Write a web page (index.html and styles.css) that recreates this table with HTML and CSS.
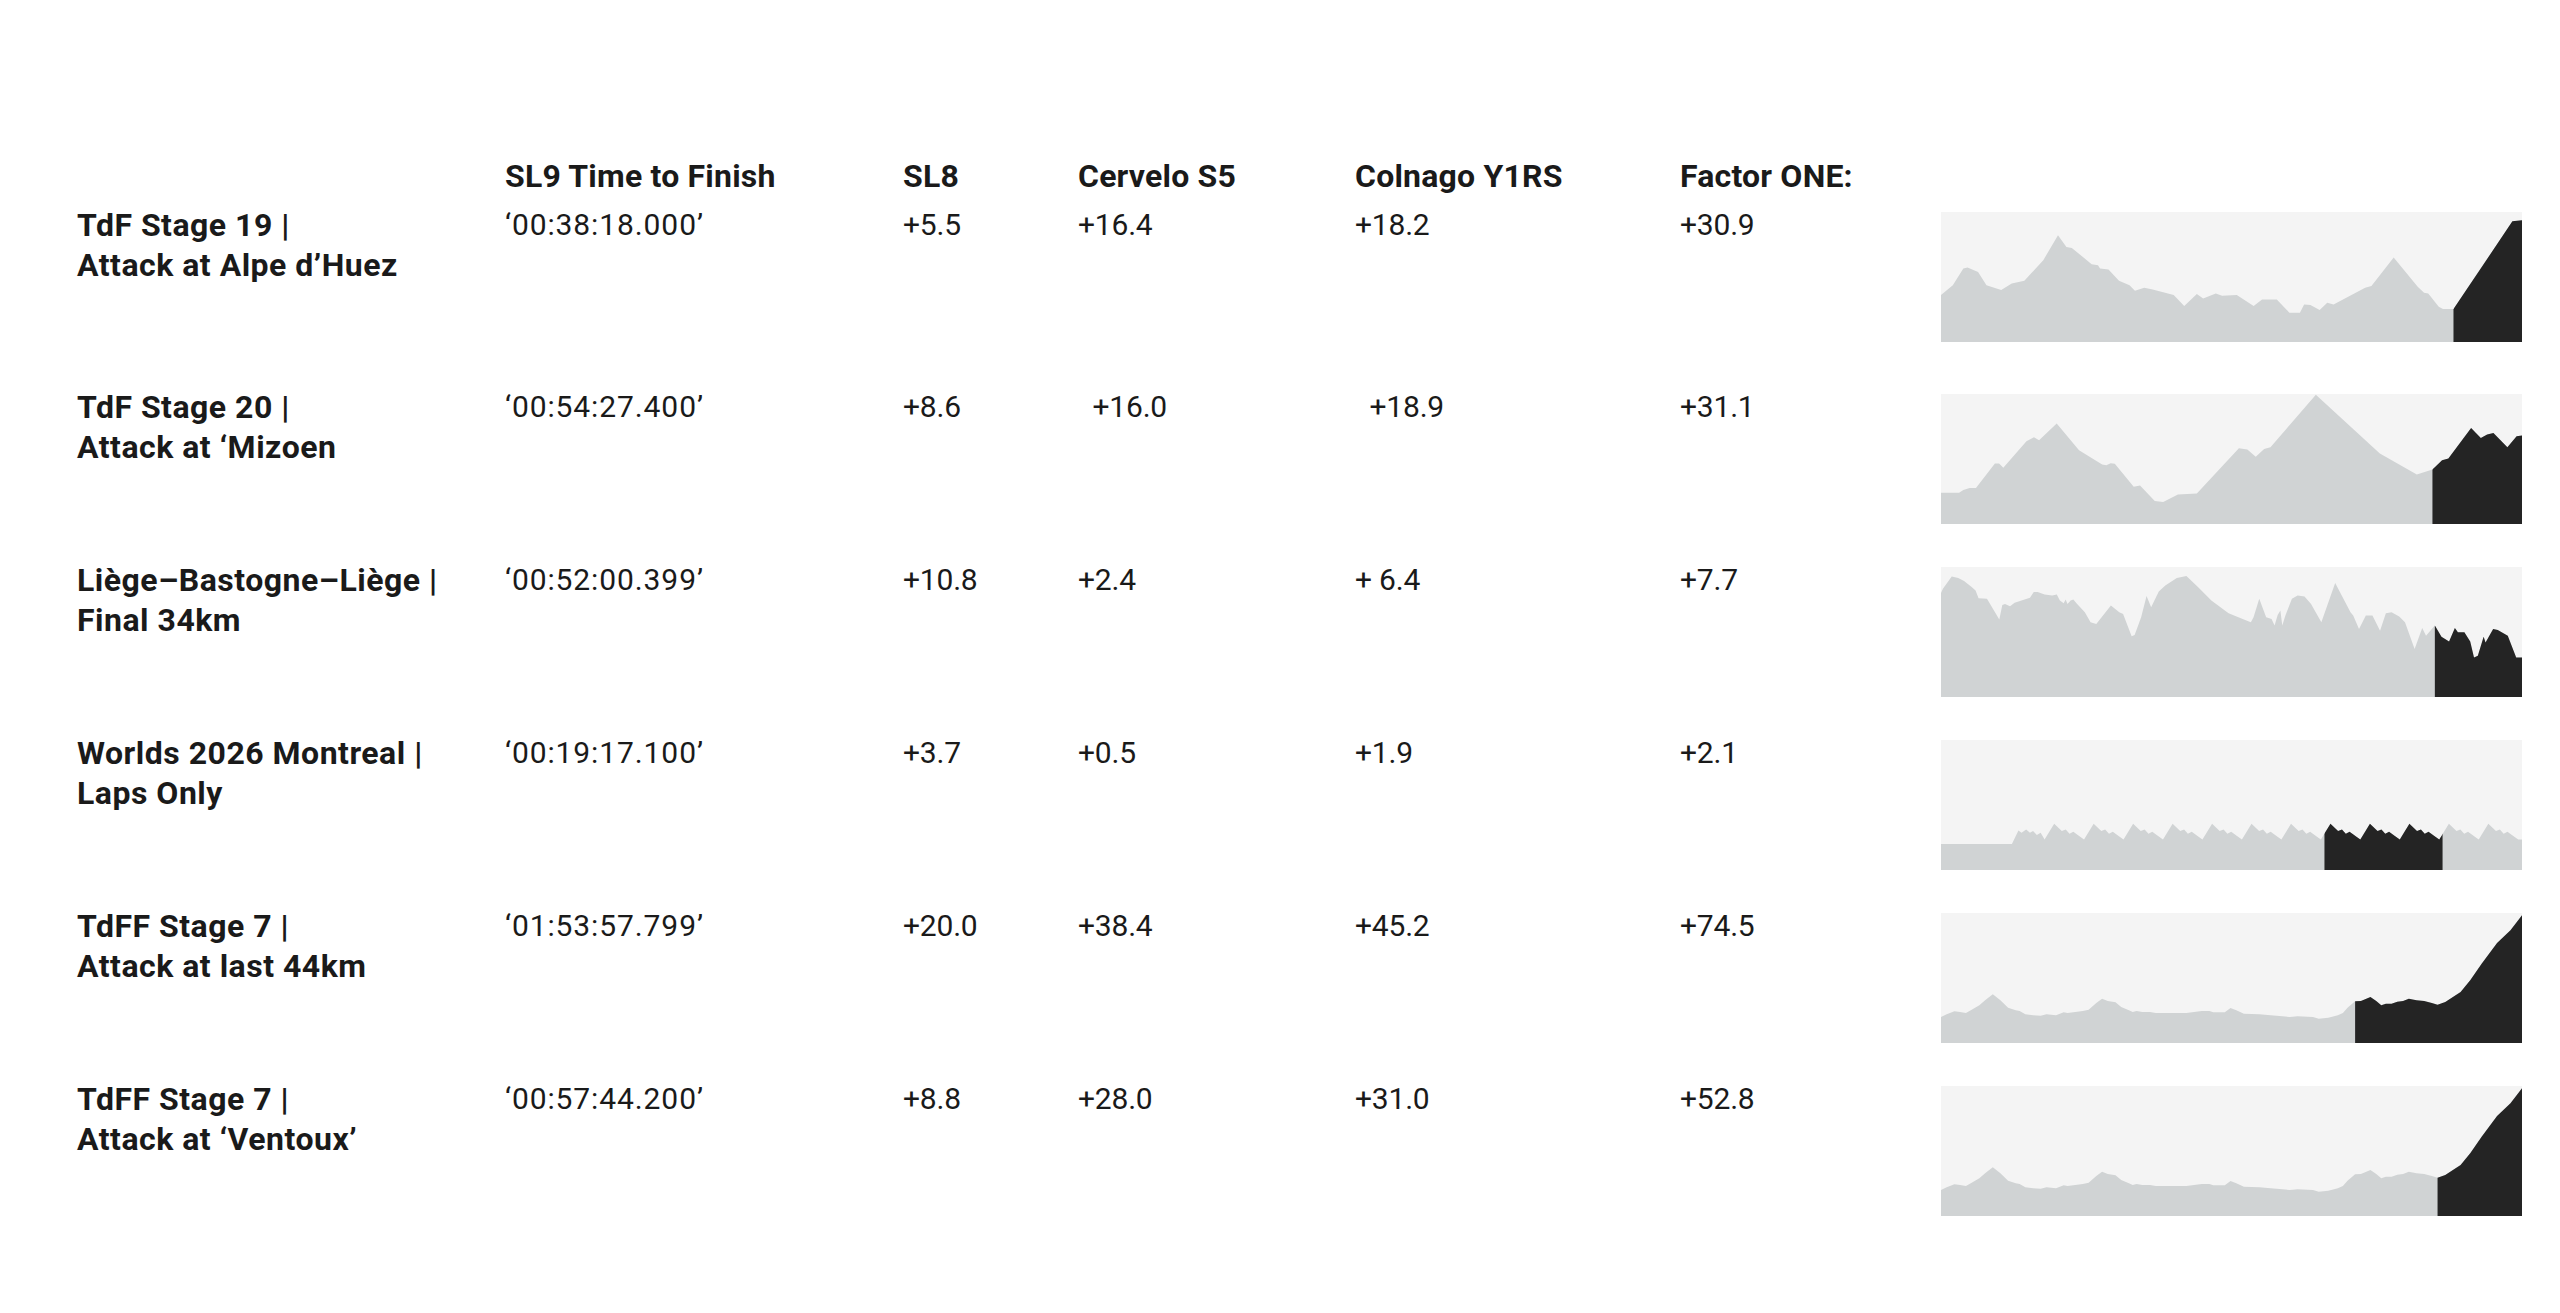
FILE: index.html
```html
<!DOCTYPE html>
<html lang="en">
<head>
<meta charset="utf-8">
<title>SL9 Time to Finish</title>
<link rel="stylesheet" href="styles.css">
</head>
<body>
<main class="table">
  <div class="grid head">
    <div></div>
    <div>SL9 Time to Finish</div>
    <div>SL8</div>
    <div>Cervelo S5</div>
    <div>Colnago Y1RS</div>
    <div>Factor ONE:</div>
    <div></div>
  </div>

  <div class="rows">
    <div class="grid row">
      <div class="label">TdF Stage 19 |<br>Attack at Alpe d’Huez</div>
      <div class="val time">‘00:38:18.000’</div>
      <div class="val">+5.5</div>
      <div class="val">+16.4</div>
      <div class="val">+18.2</div>
      <div class="val">+30.9</div>
      <svg class="chart" viewBox="0 0 580 130" preserveAspectRatio="none">
        <defs>
          <path id="p1" d="M0,130 L0,83.1 L11.8,73.2 L22.3,56.5 L26.5,55.5 L37,59.9 L45.4,73.2 L60.1,78.1 L70.6,71.5 L83.2,68.8 L102.1,48.2 L116.8,23.3 L125.2,34.9 L130.6,35.9 L150.4,52.2 L156.7,53.2 L158.8,56.5 L167.2,57.5 L177.7,68.8 L188.2,73.2 L193.6,78.8 L202.9,75.8 L211.3,77.5 L232.3,83.1 L242.8,94.1 L255.4,82.1 L261.7,86.5 L274.3,81.5 L280.6,83.8 L295.3,83.1 L312.1,94.1 L320.5,87.4 L335.2,87.4 L347.8,100.7 L358.3,100.7 L362.5,92.4 L368.8,93.1 L378,98.1 L385.6,90.8 L391.9,92.4 L423.4,75.8 L429.7,74.1 L451.9,45.6 L475.9,74.8 L482.2,80.8 L486.4,81.5 L496.9,94.8 L501.1,97.1 L511.6,97.1 L570.4,9.3 L580,8.3 L580,130 Z"/>
          <clipPath id="c1"><rect x="511.6" y="0" width="70" height="130"/></clipPath>
        </defs>
        <rect class="sky" width="580" height="130"/>
        <use href="#p1" class="land"/>
        <use href="#p1" class="climb" clip-path="url(#c1)"/>
      </svg>
    </div>

    <div class="grid row">
      <div class="label">TdF Stage 20 |<br>Attack at ‘Mizoen</div>
      <div class="val time">‘00:54:27.400’</div>
      <div class="val">+8.6</div>
      <div class="val">&nbsp;&nbsp;+16.0</div>
      <div class="val">&nbsp;&nbsp;+18.9</div>
      <div class="val">+31.1</div>
      <svg class="chart" viewBox="0 0 580 130" preserveAspectRatio="none">
        <defs>
          <path id="p2" d="M0,130 L0,98.8 L18.1,98.8 L22.3,96.1 L28.6,94.1 L34.9,94.1 L53.8,69.5 L58,69.5 L62.2,73.8 L85.3,47.2 L92.8,43.2 L97.9,46.2 L115.5,29.6 L137.8,56.2 L160.9,70.5 L165.1,71.2 L169.3,69.2 L173.5,69.8 L192.4,92.8 L198.7,91.4 L213.4,107.1 L221.8,108.1 L236.5,100.4 L255.4,99.4 L297.4,54.2 L305.8,55.5 L314.2,62.8 L322.6,54.9 L328.9,53.2 L374.2,0.7 L438.1,59.5 L475,80.5 L490.6,75.5 L500.2,66.2 L506.5,64.5 L529.2,33.9 L538.9,43.9 L545.2,40.6 L551.5,38.9 L565.4,53.2 L574.6,42.2 L580,41.6 L580,130 Z"/>
          <clipPath id="c2"><rect x="490.6" y="0" width="95" height="130"/></clipPath>
        </defs>
        <rect class="sky" width="580" height="130"/>
        <use href="#p2" class="land"/>
        <use href="#p2" class="climb" clip-path="url(#c2)"/>
      </svg>
    </div>

    <div class="grid row">
      <div class="label">Liège–Bastogne–Liège |<br>Final 34km</div>
      <div class="val time">‘00:52:00.399’</div>
      <div class="val">+10.8</div>
      <div class="val">+2.4</div>
      <div class="val">+ 6.4</div>
      <div class="val">+7.7</div>
      <svg class="chart" viewBox="0 0 580 130" preserveAspectRatio="none">
        <defs>
          <path id="p3" d="M0,130 L0,26.1 L1.9,21.8 L10.7,9.4 L17.2,11.1 L23,14.1 L30.6,20.1 L34.5,23.5 L37.5,31.2 L45.9,31.8 L58.2,52.6 L61.2,37.9 L63.9,36.9 L68.9,39.2 L73.5,35.8 L80.4,33.5 L88.8,30.8 L92.6,25.1 L96.5,25.1 L103.4,27.5 L111,28.5 L115.6,27.5 L118.7,33.5 L122.5,36.2 L124.4,32.5 L126.3,36.9 L129.4,33.5 L132.1,32.5 L135.9,36.9 L143.6,45.2 L149.3,55.3 L155,57 L169.6,38.5 L178,45.2 L181.8,46.9 L190.3,69.3 L193.3,68 L199.8,50.3 L205.2,29.1 L209.8,40.2 L217.4,24.5 L223.9,18.4 L235.4,11.1 L245,9 L256.5,20.1 L269.9,33.5 L287.1,46.2 L302.4,52.6 L309.3,55.3 L312,50.3 L317.7,31.8 L324.6,50.3 L330,51.9 L333,58.6 L336.1,47.9 L338.8,43.6 L340.7,58.6 L343.8,48.6 L350.3,31.8 L356,28.5 L362.9,29.5 L369.4,36.9 L379.7,55.3 L393.5,16.1 L408.8,45.2 L411.5,48.6 L417.3,62 L424.1,48.6 L430.7,48.6 L438.3,63.7 L444.1,46.2 L449.8,45.2 L457.4,49.6 L463.2,55.3 L472.8,82.1 L480.4,61 L484.2,68.7 L493,58.6 L499.6,69.7 L507.2,74.4 L513,61 L516,65.3 L522.5,65.3 L528.3,74.4 L532.1,90.5 L535.9,88.8 L541.7,69.7 L543.6,75.4 L551.2,62 L555.8,63 L565.8,68.7 L574.2,90.5 L580,90.5 L580,130 Z"/>
          <clipPath id="c3"><rect x="493" y="0" width="90" height="130"/></clipPath>
        </defs>
        <rect class="sky" width="580" height="130"/>
        <use href="#p3" class="land"/>
        <use href="#p3" class="climb" clip-path="url(#c3)"/>
      </svg>
    </div>

    <div class="grid row">
      <div class="label">Worlds 2026 Montreal |<br>Laps Only</div>
      <div class="val time">‘00:19:17.100’</div>
      <div class="val">+3.7</div>
      <div class="val">+0.5</div>
      <div class="val">+1.9</div>
      <div class="val">+2.1</div>
      <svg class="chart" viewBox="0 0 580 130" preserveAspectRatio="none">
        <defs>
          <path id="p4" d="M0,130 L0,103.9 L70.8,103.9 L77.3,90.5 L80.4,92.8 L85,89.4 L88.8,92.8 L91.9,91.1 L95.7,95.1 L99.5,92.8 L103.4,99.5
            L113,83.8 L120.6,91.1 L124.5,89.4 L128.3,93.8 L132.1,91.8 L137.9,96.1 L142.8,99.5
            L152.4,83.8 L160,91.1 L163.9,89.4 L167.7,93.8 L171.5,91.8 L177.3,96.1 L182.2,99.5
            L191.8,83.8 L199.4,91.1 L203.3,89.4 L207.1,93.8 L210.9,91.8 L216.7,96.1 L221.6,99.5
            L231.2,83.8 L238.8,91.1 L242.7,89.4 L246.5,93.8 L250.3,91.8 L256.1,96.1 L261,99.5
            L270.6,83.8 L278.2,91.1 L282.1,89.4 L285.9,93.8 L289.7,91.8 L295.5,96.1 L300.4,99.5
            L310,83.8 L317.6,91.1 L321.5,89.4 L325.3,93.8 L329.1,91.8 L334.9,96.1 L339.8,99.5
            L349.4,83.8 L357,91.1 L360.9,89.4 L364.7,93.8 L368.5,91.8 L374.3,96.1 L379.2,99.5
            L388.8,83.8 L396.4,91.1 L400.3,89.4 L404.1,93.8 L407.9,91.8 L413.7,96.1 L418.6,99.5
            L428.2,83.8 L435.8,91.1 L439.7,89.4 L443.5,93.8 L447.3,91.8 L453.1,96.1 L458,99.5
            L467.6,83.8 L475.2,91.1 L479.1,89.4 L482.9,93.8 L486.7,91.8 L492.5,96.1 L497.4,99.5
            L507,83.8 L514.6,91.1 L518.5,89.4 L522.3,93.8 L526.1,91.8 L531.9,96.1 L536.8,99.5
            L546.4,83.8 L554,91.1 L557.9,89.4 L561.7,93.8 L565.5,91.8 L571.3,96.1 L576.2,99.5
            L580,99.5 L580,130 Z"/>
          <clipPath id="c4"><rect x="382.8" y="0" width="117.9" height="130"/></clipPath>
        </defs>
        <rect class="sky" width="580" height="130"/>
        <use href="#p4" class="land"/>
        <use href="#p4" class="climb" clip-path="url(#c4)"/>
      </svg>
    </div>

    <div class="grid row">
      <div class="label">TdFF Stage 7 |<br>Attack at last 44km</div>
      <div class="val time">‘01:53:57.799’</div>
      <div class="val">+20.0</div>
      <div class="val">+38.4</div>
      <div class="val">+45.2</div>
      <div class="val">+74.5</div>
      <svg class="chart" viewBox="0 0 580 130" preserveAspectRatio="none">
        <defs>
          <path id="p5" d="M0,130 L0,104 L5.7,101.3 L13.4,98.3 L19.1,99 L24.9,100 L30.6,96.7 L38.3,92.3 L44,87.3 L51.7,81.3 L59.3,87.3 L67,94.7 L74.6,97.3 L78.5,98 L84.2,101.3 L91.9,102.3 L99.5,102.7 L105.3,101.3 L114.8,102.3 L122.5,99.3 L126.3,100 L134,99 L141.6,98 L147.4,96.7 L155,90 L160.8,85.7 L166.5,88 L174.2,89.3 L179.9,94 L187.6,97.3 L191.4,99 L195.2,98 L201,99 L208.6,99 L214.4,100 L245,100 L252.6,99 L260.3,98 L268,98 L271.8,99.3 L283.3,99.3 L289,95 L294.8,97.3 L302.4,100.7 L317.7,101.3 L348.3,104 L356,103.3 L371.3,104 L377.1,105.7 L386.6,104.7 L396.2,102.3 L401.2,100 L405.8,94.7 L413.4,88.3 L419.2,88 L428.7,84 L434.5,88 L439.5,92.3 L444.1,90.7 L449.8,90.7 L455.5,88.7 L461.3,88 L467,85.7 L474.7,87.3 L482.3,88 L490,90 L495.7,91.7 L503.4,89 L518.7,79 L528.3,67.3 L539.7,50.7 L555.1,30 L568.5,17.3 L580,2.3 L580,130 Z"/>
          <clipPath id="c5"><rect x="413.4" y="0" width="170" height="130"/></clipPath>
        </defs>
        <rect class="sky" width="580" height="130"/>
        <use href="#p5" class="land"/>
        <use href="#p5" class="climb" clip-path="url(#c5)"/>
      </svg>
    </div>

    <div class="grid row">
      <div class="label">TdFF Stage 7 |<br>Attack at ‘Ventoux’</div>
      <div class="val time">‘00:57:44.200’</div>
      <div class="val">+8.8</div>
      <div class="val">+28.0</div>
      <div class="val">+31.0</div>
      <div class="val">+52.8</div>
      <svg class="chart" viewBox="0 0 580 130" preserveAspectRatio="none">
        <defs>
          <clipPath id="c6"><rect x="495.7" y="0" width="90" height="130"/></clipPath>
        </defs>
        <rect class="sky" width="580" height="130"/>
        <use href="#p5" class="land"/>
        <use href="#p5" class="climb" clip-path="url(#c6)"/>
      </svg>
    </div>
  </div>
</main>
</body>
</html>
```

FILE: styles.css
```css
html, body {
  margin: 0;
  padding: 0;
  background: #ffffff;
}

body {
  font-family: Roboto, "Liberation Sans", Arial, sans-serif;
  color: #1a1a1a;
}

.table {
  padding: 156px 38px 0 77px;
}

.grid {
  display: grid;
  grid-template-columns: 428px 398px 175px 277px 325px 261px 581px;
  align-items: start;
}

.head {
  font-size: 32px;
  font-weight: 700;
  line-height: 40px;
  height: 40px;
  margin-bottom: 9px;
  white-space: nowrap;
  letter-spacing: 0.2px;
}

.rows {
  display: flex;
  flex-direction: column;
  gap: 36px;
}

.rows .row:first-child {
  margin-bottom: 9px;
}

.label {
  font-size: 32px;
  font-weight: 700;
  line-height: 40px;
  white-space: nowrap;
  letter-spacing: 0.5px;
}

.val {
  font-size: 30px;
  font-weight: 400;
  line-height: 40px;
  white-space: nowrap;
  letter-spacing: -0.2px;
}

.val.time {
  letter-spacing: 0.9px;
}

.chart {
  display: block;
  width: 581px;
  height: 130px;
  margin-top: 7px;
}

.sky {
  fill: #f4f4f4;
}

.land {
  fill: #d0d3d4;
}

.climb {
  fill: #242424;
}
```
